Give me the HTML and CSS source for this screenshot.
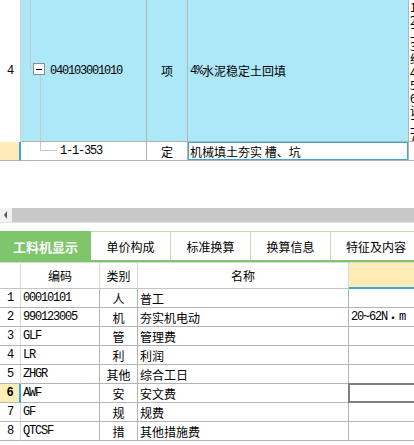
FILE: index.html
```html
<!DOCTYPE html>
<html lang="zh">
<head>
<meta charset="utf-8">
<title>工料机显示</title>
<link rel="stylesheet" href="styles.css">
</head>
<body>
<div class="top">
  <div class="trow r4">
    <div class="c num"><span class="lat">4</span></div>
    <div class="c code lvl1">
      <svg class="tree" width="126" height="141" viewBox="0 0 126 141">
        <line x1="9.5" y1="0" x2="9.5" y2="68.5" stroke="#c8c8c8"/>
        <line x1="9.5" y1="68.5" x2="12" y2="68.5" stroke="#c8c8c8"/>
        <line x1="19.5" y1="74" x2="19.5" y2="141" stroke="#c8c8c8"/>
        <rect x="12.5" y="63.5" width="11" height="11" fill="#fff" stroke="#8c8c8c"/>
        <line x1="15" y1="69.5" x2="21" y2="69.5" stroke="#000"/>
      </svg>
      <span class="lat">040103001010</span>
    </div>
    <div class="c type">项</div>
    <div class="c name"><span class="lat">4%</span>水泥稳定土回填</div>
    <div class="c desc">
      <div class="dl">1.土质</div>
      <div class="dl">2.压实度</div>
      <div class="dl">工作内容</div>
      <div class="dl">3.填料</div>
      <div class="dl">结构层</div>
      <div class="dl">4.铺设</div>
      <div class="dl">5.碾压</div>
      <div class="dl">6.养护</div>
      <div class="dl">说明</div>
      <div class="dl">工程量</div>
      <div class="dl">7.其他</div>
    </div>
  </div>
  <div class="trow rs">
    <div class="c num cur"></div>
    <div class="c code lvl2">
      <svg class="tree" width="126" height="18" viewBox="0 0 126 18">
        <line x1="19.5" y1="0" x2="19.5" y2="8.5" stroke="#c8c8c8"/>
        <line x1="19.5" y1="8.5" x2="36" y2="8.5" stroke="#c8c8c8"/>
      </svg>
      <span class="lat">1-1-353</span>
    </div>
    <div class="c type">定</div>
    <div class="c name sel">机械填土夯实 槽、坑</div>
    <div class="c desc2"></div>
  </div>
</div>

<div class="spacer"></div>

<div class="hscroll">
  <div class="hs-btn">
    <svg width="12" height="14" viewBox="0 0 12 14"><polygon points="4,7 7,3 7,11" fill="#5a5a5a"/></svg>
  </div>
  <div class="hs-track"></div>
</div>
<div class="hs-gap"></div>

<div class="tabs">
  <div class="tab active">工料机显示</div>
  <div class="tab">单价构成</div>
  <div class="tab">标准换算</div>
  <div class="tab">换算信息</div>
  <div class="tab wide">特征及内容</div>
</div>

<div class="grid">
  <div class="grow ghead">
    <div class="g gnum"></div>
    <div class="g center">编码</div>
    <div class="g center">类别</div>
    <div class="g center">名称</div>
    <div class="g hl"></div>
  </div>
  <div class="grow">
    <div class="g gnum"><span class="lat">1</span></div>
    <div class="g left"><span class="lat">00010101</span></div>
    <div class="g center">人</div>
    <div class="g left">普工</div>
    <div class="g last"></div>
  </div>
  <div class="grow">
    <div class="g gnum"><span class="lat">2</span></div>
    <div class="g left"><span class="lat">990123005</span></div>
    <div class="g center">机</div>
    <div class="g left">夯实机电动</div>
    <div class="g last spec"><span class="lat">20~62N</span><span class="dot">・</span><span class="lat">m</span></div>
  </div>
  <div class="grow">
    <div class="g gnum"><span class="lat">3</span></div>
    <div class="g left"><span class="lat">GLF</span></div>
    <div class="g center">管</div>
    <div class="g left">管理费</div>
    <div class="g last"></div>
  </div>
  <div class="grow">
    <div class="g gnum"><span class="lat">4</span></div>
    <div class="g left"><span class="lat">LR</span></div>
    <div class="g center">利</div>
    <div class="g left">利润</div>
    <div class="g last"></div>
  </div>
  <div class="grow">
    <div class="g gnum"><span class="lat">5</span></div>
    <div class="g left"><span class="lat">ZHGR</span></div>
    <div class="g center">其他</div>
    <div class="g left">综合工日</div>
    <div class="g last"></div>
  </div>
  <div class="grow">
    <div class="g gnum cur"><span class="lat">6</span></div>
    <div class="g left"><span class="lat">AWF</span></div>
    <div class="g center">安</div>
    <div class="g left">安文费</div>
    <div class="g last focus"></div>
  </div>
  <div class="grow">
    <div class="g gnum"><span class="lat">7</span></div>
    <div class="g left"><span class="lat">GF</span></div>
    <div class="g center">规</div>
    <div class="g left">规费</div>
    <div class="g last"></div>
  </div>
  <div class="grow">
    <div class="g gnum"><span class="lat">8</span></div>
    <div class="g left"><span class="lat">QTCSF</span></div>
    <div class="g center">措</div>
    <div class="g left">其他措施费</div>
    <div class="g last"></div>
  </div>
</div>
</body>
</html>
```

FILE: styles.css
```css
html, body {
  margin: 0;
  padding: 0;
}
body {
  width: 414px;
  height: 445px;
  overflow: hidden;
  background: #fff;
  color: #000;
  font-family: "Noto Sans CJK SC", "Noto Sans", sans-serif;
  font-size: 12px;
}

.lat {
  font-family: "Liberation Mono", "DejaVu Sans Mono", monospace;
  font-size: 12px;
  letter-spacing: -1.2px;
}

/* ---------- top tree table ---------- */
.top {
  width: 480px;
}
.trow {
  display: grid;
  grid-template-columns: 21px 126px 41px 221px 71px;
}
.r4 { height: 142px; }
.rs { height: 19px; }

.c {
  box-sizing: border-box;
  display: flex;
  align-items: center;
  overflow: hidden;
  white-space: nowrap;
  border-right: 1px solid #b4b4b4;
  border-bottom: 1px solid #b4b4b4;
}
.r4 .c { background: #ade8f9; }
.r4 .num {
  background: #fff;
  border-bottom: none;
  border-right: 1px solid #cfcfcf;
  justify-content: center;
}
.num { justify-content: center; }
.rs .num.cur {
  background: #ffedb8;
  border-right: 2px solid #3aa8d8;
}
.code { position: relative; }
.tree { position: absolute; left: 0; top: 0; }
.lvl1 .lat { position: relative; padding-left: 29px; }
.lvl2 .lat { position: relative; padding-left: 39px; }
.type { justify-content: center; }
.name { padding-left: 2px; }
.r4 .desc {
  background: #fff;
  border-right: none;
  display: block;
  padding: 0 0 0 1px;
}
.dl {
  height: 13px;
  line-height: 13px;
  font-size: 12px;
  white-space: nowrap;
  overflow: hidden;
}
.desc2 { border-right: none; }

.sel { position: relative; }
.sel::after {
  content: "";
  position: absolute;
  top: -1px;
  left: -1px;
  right: -1px;
  bottom: -1px;
  border: 2px solid #3aa8d8;
}

/* ---------- horizontal scrollbar ---------- */
.spacer { height: 47px; }
.hscroll {
  display: flex;
  height: 14px;
  border-bottom: 1px solid #e2e2e2;
}
.hs-btn {
  width: 12px;
  background: #f2f2f2;
  display: flex;
}
.hs-track {
  flex: 1;
  background: #c8c8c8;
}
.hs-gap { height: 8px; }

/* ---------- tabs ---------- */
.tabs {
  display: flex;
  width: 480px;
  border-bottom: 2px solid #7ec56b;
}
.tab {
  box-sizing: border-box;
  height: 29px;
  width: 80px;
  border-top: 1px solid #b9e0aa;
  border-right: 1px solid #b9e0aa;
  display: flex;
  align-items: center;
  justify-content: center;
  font-size: 12px;
  white-space: nowrap;
}
.tab.active {
  width: 91px;
  background: #7ec56b;
  border-top-color: #7ec56b;
  border-right: none;
  color: #fff;
  font-weight: bold;
  font-size: 13px;
}
.tab.wide { width: 91px; }

/* ---------- resource grid ---------- */
.grid {
  width: 480px;
  border-top: 1px solid #d8d8d8;
}
.grow {
  display: grid;
  grid-template-columns: 21px 79px 38px 211px 131px;
  height: 19px;
}
.grow.ghead { height: 26px; }
.g {
  box-sizing: border-box;
  display: flex;
  align-items: center;
  overflow: hidden;
  white-space: nowrap;
  border-right: 1px solid #b4b4b4;
  border-bottom: 1px solid #b4b4b4;
}
.ghead .g {
  border-right-color: #d8d8d8;
  border-bottom-color: #c4c4c4;
}
.gnum {
  justify-content: center;
  border-right-color: #d8d8d8;
}
.gnum.cur {
  background: #ffedb8;
  border-right: 2px solid #3aa8d8;
  font-weight: bold;
}
.gnum.cur .lat { font-weight: bold; }
.center { justify-content: center; }
.left { padding-left: 2px; }
.ghead .hl {
  background: #ffedb8;
  border-bottom: 1px solid #3aa8d8;
  box-shadow: inset 0 -1px 0 #3aa8d8;
}
.last { border-right: none; }
.spec { padding-left: 2px; }
.dot { font-size: 12px; }
.focus { position: relative; overflow: visible; }
.focus::after {
  content: "";
  position: absolute;
  top: -1px;
  left: -1px;
  right: -1px;
  bottom: -1px;
  border: 2px solid #7f7f7f;
}
```
